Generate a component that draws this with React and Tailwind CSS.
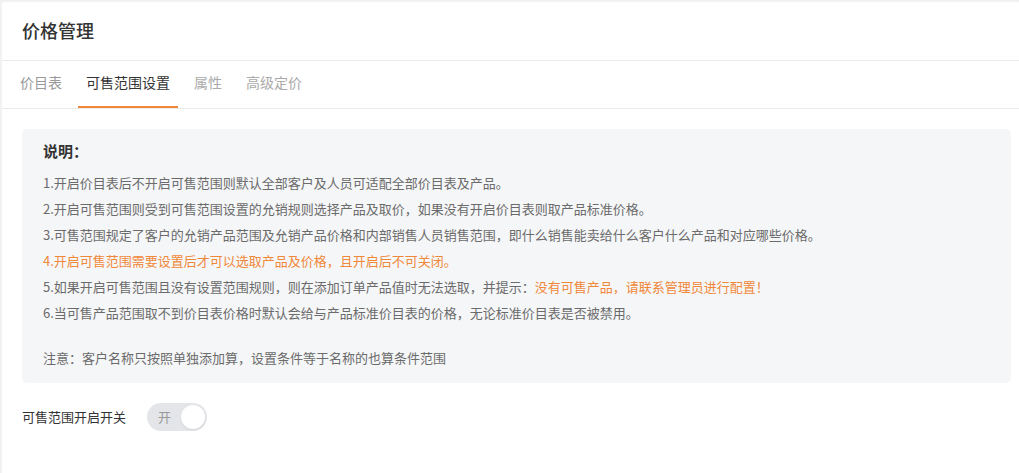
import React from "react";

const lines = [
  "1.开启价目表后不开启可售范围则默认全部客户及人员可适配全部价目表及产品。",
  "2.开启可售范围则受到可售范围设置的允销规则选择产品及取价，如果没有开启价目表则取产品标准价格。",
  "3.可售范围规定了客户的允销产品范围及允销产品价格和内部销售人员销售范围，即什么销售能卖给什么客户什么产品和对应哪些价格。",
];

export default function App() {
  return (
    <div className="w-[1019px] h-[473px] bg-white overflow-hidden border-l-[2px] border-[#f2f2f2] font-['Noto_Sans_CJK_SC','Noto_Sans',sans-serif]">
      <div className="h-[3px] bg-gradient-to-b from-[#ebebeb] to-white" />
      <div className="h-[58px] border-b border-[#ebebeb] flex items-center pl-[20px] pb-[2px]">
        <span className="text-[18px] text-[#333] font-medium">价格管理</span>
      </div>
      <div className="h-[48px] border-b border-[#ebebeb] flex pl-[10px] gap-[8px] text-[14px]">
        <div className="px-[8px] pb-[4px] flex items-center text-[#999]">价目表</div>
        <div className="px-[8px] pb-[2px] flex items-center text-[#333] border-b-[2px] border-[#f0883a]">可售范围设置</div>
        <div className="px-[8px] pb-[4px] flex items-center text-[#aaa]">属性</div>
        <div className="px-[8px] pb-[4px] flex items-center text-[#aaa]">高级定价</div>
      </div>
      <div className="ml-[20px] mt-[20px] w-[989px] rounded-[5px] bg-[#f5f6f8] pl-[21px] pt-[10px] pb-[12px] text-[13px] text-[#6b6b6b] leading-[26px]">
        <div className="text-[15px] font-bold text-[#333] leading-[24px] mb-[7px]">说明：</div>
        {lines.map((l) => (
          <div key={l}>{l}</div>
        ))}
        <div className="text-[#f0883a]">4.开启可售范围需要设置后才可以选取产品及价格，且开启后不可关闭。</div>
        <div>
          5.如果开启可售范围且没有设置范围规则，则在添加订单产品值时无法选取，并提示：
          <span className="text-[#f0883a]">没有可售产品，请联系管理员进行配置！</span>
        </div>
        <div>6.当可售产品范围取不到价目表价格时默认会给与产品标准价目表的价格，无论标准价目表是否被禁用。</div>
        <div className="mt-[19px]">注意：客户名称只按照单独添加算，设置条件等于名称的也算条件范围</div>
      </div>
      <div className="mt-[20px] ml-[20px] flex items-center gap-[21px]">
        <span className="text-[13px] text-[#333]">可售范围开启开关</span>
        <div className="w-[60px] h-[28px] rounded-full bg-[#e3e5e9] flex items-center justify-between pl-[11px] pr-[2px]">
          <span className="text-[13px] text-[#999]">开</span>
          <span className="w-[24px] h-[24px] rounded-full bg-white shadow-[0_1px_2px_rgba(0,0,0,0.08)]" />
        </div>
      </div>
    </div>
  );
}
